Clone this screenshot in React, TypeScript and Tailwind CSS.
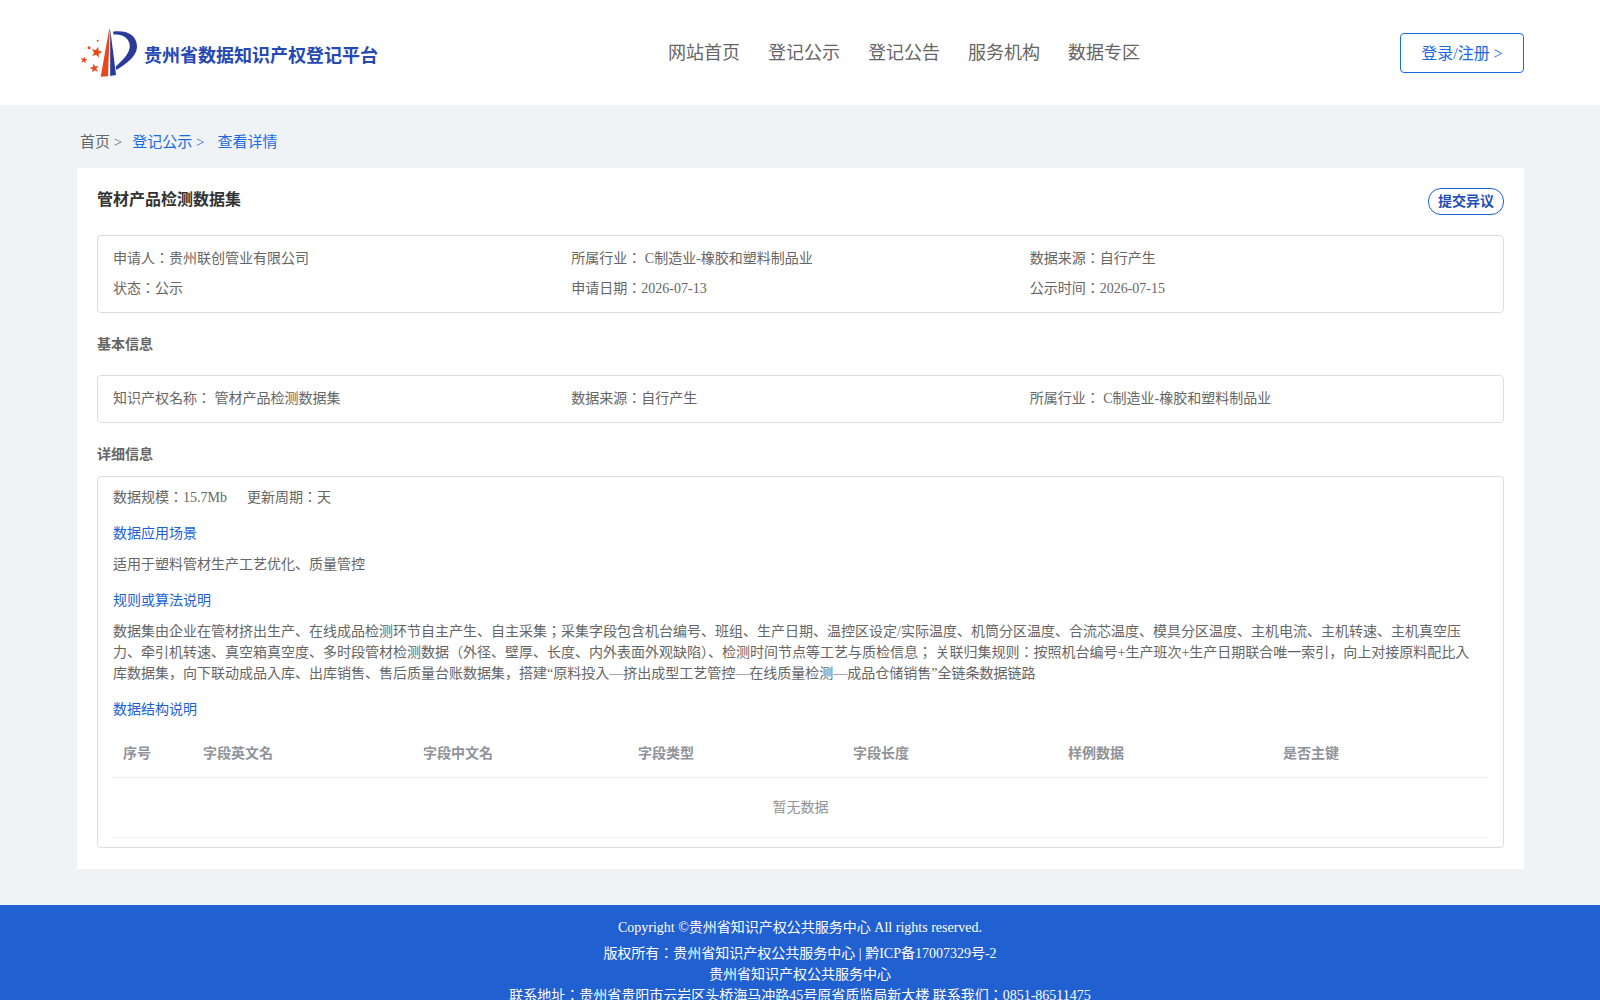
import React from 'react';

const font = "font-['Liberation_Serif','Noto_Sans_CJK_JP',serif]";

const columns = ['序号', '字段英文名', '字段中文名', '字段类型', '字段长度', '样例数据', '是否主键'];

function Star({ cx, cy, r, rot = 0 }: { cx: number; cy: number; r: number; rot?: number }) {
  const pts = [];
  for (let i = 0; i < 10; i++) {
    const a = ((i * 36 + rot - 90) * Math.PI) / 180;
    const rad = i % 2 ? r * 0.42 : r;
    pts.push(`${(cx + rad * Math.cos(a)).toFixed(2)},${(cy + rad * Math.sin(a)).toFixed(2)}`);
  }
  return <polygon points={pts.join(' ')} />;
}

function Logo() {
  return (
    <svg width="58" height="50" viewBox="0 0 58 50" className="shrink-0">
      <g fill="#e8481c">
        <Star cx={16.7} cy={24.3} r={5.8} rot={15} />
        <Star cx={4} cy={32} r={3.6} rot={10} />
        <Star cx={14.3} cy={40.3} r={4.8} rot={-10} />
        <circle cx="9" cy="19.7" r="1.5" />
        <circle cx="17.7" cy="12.7" r="1" />
        <path d="M29.2 1 L20.7 48.7 L28 48.3 L29.8 1 Z" />
      </g>
      <path d="M30.2 1 L30.2 48 L36 47 Z" fill="#2b3a98" />
      <path d="M33 3.7 C45 2 57 6 57 18.7 C57 28 46 36 36.2 42 L35.8 38.5 C43 32 51.5 24 49.5 15.5 C47.5 8 40 6 33.6 6.5 Z" fill="#2b3a98" />
    </svg>
  );
}

function Header() {
  return (
    <header className="h-[105px] bg-white flex items-start px-20">
      <div className="flex items-center w-[588px] pt-[28px]">
        <Logo />
        <span className="ml-[6px] mt-[5px] text-lg font-bold text-[#2548b4]">贵州省数据知识产权登记平台</span>
      </div>
      <nav className="flex gap-7 pt-[40px] text-lg leading-[26px] text-[#666666]">
        <span>网站首页</span>
        <span>登记公示</span>
        <span>登记公告</span>
        <span>服务机构</span>
        <span>数据专区</span>
      </nav>
      <button className="ml-auto mr-[-4px] mt-[33px] w-[124px] h-10 pt-[2px] rounded border border-[#1a6ae6] text-base text-[#1a6ae6] bg-white">登录/注册 &gt;</button>
    </header>
  );
}

function InfoGrid({ rows }: { rows: string[][] }) {
  return (
    <div className="border border-[#dddddd] rounded px-[15px] pt-[8px] pb-[8px] text-sm text-[#666666]">
      {rows.map((row, i) => (
        <div key={i} className="grid grid-cols-3 h-[30px] leading-[30px]">
          {row.map((cell) => (
            <span key={cell}>{cell}</span>
          ))}
        </div>
      ))}
    </div>
  );
}

function SubTitle({ children }: { children: React.ReactNode }) {
  return <div className="text-sm leading-[21px] text-[#1a62d6]">{children}</div>;
}

export default function App() {
  return (
    <div className={`${font} bg-[#eff3f6]`}>
      <Header />

      <div className="mx-[77px] w-[1447px]">
        <div className="h-[63px] pt-[26px] pl-[3px] text-[15px] leading-[22px] flex">
          <span className="text-[#666666]">首页 &gt;</span>
          <span className="ml-[10px] text-[#1a6ae6]">登记公示 &gt;</span>
          <span className="ml-[13px] text-[#1a6ae6]">查看详情</span>
        </div>

        <main className="bg-white h-[701px] px-5 pt-5">
          <div className="flex justify-between h-[47px]">
            <h1 className="text-base font-bold leading-6 text-[#333333]">管材产品检测数据集</h1>
            <button className="w-[76px] h-[27px] rounded-[13px] border border-[#1a62d6] text-sm font-bold text-[#1f50b8]">提交异议</button>
          </div>

          <InfoGrid
            rows={[
              ['申请人：贵州联创管业有限公司', '所属行业： C制造业-橡胶和塑料制品业', '数据来源：自行产生'],
              ['状态：公示', '申请日期：2026-07-13', '公示时间：2026-07-15'],
            ]}
          />

          <h2 className="mt-[21px] mb-[19px] text-sm font-bold leading-[22px] text-[#666666]">基本信息</h2>

          <div className="border border-[#dddddd] rounded px-[15px] h-[48px] grid grid-cols-3 items-center text-sm text-[#666666]">
            <span>知识产权名称： 管材产品检测数据集</span>
            <span>数据来源：自行产生</span>
            <span>所属行业： C制造业-橡胶和塑料制品业</span>
          </div>

          <h2 className="mt-[21px] mb-[10px] text-sm font-bold leading-[22px] text-[#666666]">详细信息</h2>

          <section className="border border-[#dddddd] rounded px-[15px] pt-[10px] h-[372px] text-sm text-[#666666]">
            <div className="flex gap-5 leading-[21px] mb-[15px]">
              <span>数据规模：15.7Mb</span>
              <span>更新周期：天</span>
            </div>
            <SubTitle>数据应用场景</SubTitle>
            <p className="mt-[10px] mb-[15px] leading-[21px]">适用于塑料管材生产工艺优化、质量管控</p>
            <SubTitle>规则或算法说明</SubTitle>
            <p className="mt-[10px] mb-[15px] pr-[8px] leading-[21px]">
              数据集由企业在管材挤出生产、在线成品检测环节自主产生、自主采集；采集字段包含机台编号、班组、生产日期、温控区设定/实际温度、机筒分区温度、合流芯温度、模具分区温度、主机电流、主机转速、主机真空压力、牵引机转速、真空箱真空度、多时段管材检测数据（外径、壁厚、长度、内外表面外观缺陷）、检测时间节点等工艺与质检信息； 关联归集规则：按照机台编号+生产班次+生产日期联合唯一索引，向上对接原料配比入库数据集，向下联动成品入库、出库销售、售后质量台账数据集，搭建“原料投入—挤出成型工艺管控—在线质量检测—成品仓储销售”全链条数据链路
            </p>
            <SubTitle>数据结构说明</SubTitle>

            <div className="mt-[10px] grid grid-cols-[80px_220px_repeat(5,1fr)] h-[48px] items-center border-b border-[#ebeef5] font-bold text-[#909399]">
              {columns.map((c) => (
                <span key={c} className="px-[10px]">{c}</span>
              ))}
            </div>
            <div className="h-[60px] flex items-center justify-center border-b border-[#ebeef5] text-[#909399]">暂无数据</div>
          </section>
        </main>
      </div>

      <footer className="mt-[36px] bg-[#2160d0] pt-[12px] pb-[20px] text-center text-sm leading-[21px] text-white">
        <div className="mb-[5px]">Copyright ©贵州省知识产权公共服务中心 All rights reserved.</div>
        <div>版权所有：贵州省知识产权公共服务中心 | 黔ICP备17007329号-2</div>
        <div>贵州省知识产权公共服务中心</div>
        <div>联系地址：贵州省贵阳市云岩区头桥海马冲路45号原省质监局新大楼 联系我们：0851-86511475</div>
      </footer>
    </div>
  );
}
